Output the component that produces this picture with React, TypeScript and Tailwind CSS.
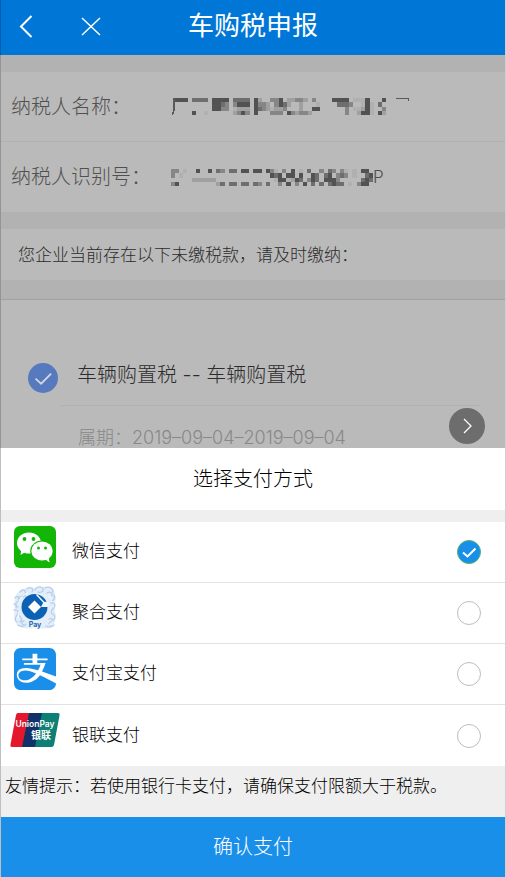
import { useState } from "react";
import type { ReactNode } from "react";
import { FaAlipay } from "react-icons/fa";

const shades: Record<string, string> = {
  "1": "#b0b0b0",
  "2": "#a0a0a0",
  "3": "#868686",
  "4": "#6e6e6e",
  "5": "#525252",
};

const nameCells = [
  ".555.4444.5555.4444.52..335.22332.3....5555.1115...5......",
  "..........5543.3555.5332.3542..2...1....4443..151.4.......",
  "..........5533.1222.54321223...2..55......3.11251..3......",
  ".....5..1......2353.5...333.532332........3..2551.52......",
];

const numberCells = [
  "33.1..5..5.43.44.55.55.531.3.5.1.4..3.43.31.1.55.",
  "3.1.....................545.55.5..54.45.343.1..45",
  ".....222222..............1551254.354.5553.....454",
  "35.........24.44.44.43.4..3.5.3.5.4.4.4544.1.355.",
];

function Mosaic({ cells, children }: { cells: string[]; children?: ReactNode }) {
  const cols = cells[0].length;
  return (
    <svg width={Math.round(cols * 4.13)} height="17" viewBox={`0 0 ${cols} 4`} preserveAspectRatio="none" shapeRendering="crispEdges" aria-hidden="true">
      {cells.map((row, y) =>
        row.split("").map((c, x) =>
          c === "." ? null : <rect key={`${x}-${y}`} x={x} y={y} width="1" height="1" fill={shades[c]} />
        )
      )}
      {children}
    </svg>
  );
}

function WechatIcon() {
  return (
    <svg width="42" height="42" viewBox="0 0 42 42" aria-hidden="true">
      <rect width="42" height="42" rx="6" fill="#13b607" />
      <path d="M7.500 22 6.500 29 13 25z" fill="#fff" />
      <ellipse cx="15" cy="17" rx="12" ry="10.500" fill="#fff" />
      <ellipse cx="28" cy="25" rx="11.800" ry="10.400" fill="#13b607" />
      <ellipse cx="28" cy="25" rx="10.700" ry="9.400" fill="#fff" />
      <path d="M30 32.500 35.500 36.500 34.500 30z" fill="#fff" />
      <circle cx="10.500" cy="13" r="1.900" fill="#13b607" />
      <circle cx="19.500" cy="13" r="1.900" fill="#13b607" />
      <circle cx="24.500" cy="22" r="1.500" fill="#13b607" />
      <circle cx="31.500" cy="22" r="1.500" fill="#13b607" />
    </svg>
  );
}

function CcbIcon() {
  return (
    <svg width="46" height="46" viewBox="0 0 46 46" aria-hidden="true">
      <path d="M5 8Q14 0 24 3Q34-1 42 5Q45 14 42 22Q46 32 41 41Q32 46 24 42Q12 46 5 40Q0 32 3 23Q1 14 5 8z" fill="#e4eef9" />
      <g fill="none" stroke="#b4cfed" strokeWidth="1.300" strokeLinecap="round">
        <path d="M3 13c3-4 6 1 3 3s-3 5 0 6M8 7c3-4 7-1 5 2s-6 2-7 5M15 4c4-3 7 0 5 3M23 5c2-4 7-4 8-1s-3 4-5 3" />
        <path d="M33 3c4-2 8 0 8 4M35 8c3-2 6 0 5 3M42 10c2 4-1 6-3 5M39 18c4-1 5 3 3 5s-4 3-2 6" />
        <path d="M2 25c4-1 5 2 3 5s-3 5 0 7M7 30c2 3 4 4 1 7M6 40c3 2 6 2 8-1M12 36c-3 0-3 3 0 4" />
        <path d="M41 29c3 2 2 6-1 7s-4 4-1 5M37 34c3-1 5 1 3 4M34 41c3 2 6 1 8-1M11 12c2-2 4-1 3 1M2 19c2 0 3 2 2 4" />
      </g>
      <g fill="none" stroke="#fff" strokeWidth="1">
        <path d="M7 16c2-4 5-7 9-8M37 11c2 2 3 4 2 6M6 27c1 2 1 4 0 6M37 40c2-1 3-2 4-4" />
      </g>
      <circle cx="22.500" cy="22" r="13" fill="#0b62b5" />
      <path d="M24.500 9.500 32 17.500" stroke="#fff" strokeWidth="1.400" />
      <path d="M31.500 17 37 16.500 36.500 22H29z" fill="#eef5fc" />
      <path d="M22.500 15.500 29 22 22.500 28.500 16 22z" fill="#fff" />
      <text x="23" y="42" textAnchor="middle" fontFamily="Inter, sans-serif" fontSize="7" fontWeight="700" fill="#1d68b4">Pay</text>
    </svg>
  );
}

function UnionPayIcon() {
  return (
    <svg width="50" height="34" viewBox="0 0 50 34" aria-hidden="true">
      <path d="M8 0h12l-7 34H2q-2 0-1.600-2L6 2q.5-2 2-2z" fill="#e3182d" />
      <path d="M19 0h14l-7 34H12z" fill="#123168" />
      <path d="M32 0h16q2 0 1.600 2L44 32q-.5 2-2.500 2H25z" fill="#0d7f74" />
      <text x="25" y="14" textAnchor="middle" fontFamily="Inter, sans-serif" fontSize="8.500" fontWeight="600" fill="#fff">UnionPay</text>
      <text x="31" y="26" textAnchor="middle" fontFamily="Inter, 'Noto Sans CJK SC', sans-serif" fontSize="10" fontWeight="700" fill="#fff">银联</text>
    </svg>
  );
}

function Check({ className }: { className: string }) {
  return (
    <svg viewBox="0 0 24 24" className={className} fill="none" stroke="currentColor" aria-hidden="true">
      <path d="M6 12.500 10.500 16.500 18.500 8.500" />
    </svg>
  );
}

const methods = [
  { id: "wechat", label: "微信支付", icon: <WechatIcon /> },
  { id: "ccb", label: "聚合支付", icon: <CcbIcon /> },
  { id: "alipay", label: "支付宝支付", icon: <FaAlipay className="h-12 w-[42px] text-[#1a8fea]" /> },
  { id: "unionpay", label: "银联支付", icon: <UnionPayIcon /> },
];

function App() {
  const [method, setMethod] = useState("wechat");
  const [selected, setSelected] = useState(true);

  return (
    <div className="flex min-h-screen flex-col border-r border-[#d0d0d0] bg-[#efefef] font-['Inter','Noto_Sans_CJK_SC',sans-serif] font-light">
      <header className="grid h-[55px] grid-cols-[1fr_auto_1fr] items-center border-l border-black/20 bg-[#0077d6] pb-1 text-white">
        <div className="flex items-center pl-4">
          <button type="button" aria-label="返回" className="flex w-16 items-center">
            <svg width="20" height="24" viewBox="0 0 20 24" fill="none" stroke="currentColor" strokeWidth="2" aria-hidden="true">
              <path d="M14.500 2 4 12.500 14.500 23" />
            </svg>
          </button>
          <button type="button" aria-label="关闭">
            <svg width="20" height="20" viewBox="0 0 20 20" fill="none" stroke="currentColor" strokeWidth="1.500" aria-hidden="true">
              <path d="M1 2 19 19M19 2 1 19" />
            </svg>
          </button>
        </div>
        <h1 className="text-[26px] leading-8 font-normal">车购税申报</h1>
      </header>

      <main className="relative flex-1 border-l border-black/20 bg-[#bababa] text-[#2c2c2c]">
        <dl className="border-y-[17px] border-[#b2b2b2] text-[20px] leading-6 text-[#505050]">
          <div className="flex h-[70px] items-center border-b border-[#b0b0b0] pl-[10px]">
            <dt className="w-40">纳税人名称：</dt>
            <dd>
              <Mosaic cells={nameCells}>
                <path d="M1 0H.6V2.500L.1 4H.5L1 2.500z" fill="#5a5a5a" />
                <path d="M54.300 0H57.500V.7H57.200V.3H54.300z" fill="#5a5a5a" />
              </Mosaic>
            </dd>
          </div>
          <div className="flex h-[70px] items-center pl-[10px]">
            <dt className="w-40">纳税人识别号：</dt>
            <dd className="flex items-center">
              <Mosaic cells={numberCells} />
              <span className="text-[17px] leading-5">P</span>
            </dd>
          </div>
        </dl>
        <p className="h-[51px] pl-[17px] text-[17px] leading-[52px]">您企业当前存在以下未缴税款，请及时缴纳：</p>
        <div className="h-5 border-b border-[#a2a2a2] bg-[#b2b2b2]" />
        <section className="pt-[57px] pl-[27px]">
          <div className="flex items-center">
            <label className="relative mt-[6px] mr-[19px] block size-[30px]">
              <input
                type="checkbox"
                aria-label="车辆购置税"
                checked={selected}
                onChange={(e) => setSelected(e.target.checked)}
                className="peer block size-[30px] appearance-none rounded-full border border-[#8d8d8d] checked:border-0 checked:bg-[#5779bd]"
              />
              <Check className="pointer-events-none absolute inset-0 hidden stroke-[1.5] text-[#d0d6e2] peer-checked:block" />
            </label>
            <h2 className="text-[20px] leading-7 font-light">车辆购置税 -- 车辆购置税</h2>
          </div>
          <p className="mt-3 mr-6 ml-8 border-t border-[#b1b1b1] pt-[22px] pl-[18px] text-[18px] leading-5 text-[#888]">属期：2019–09–04–2019–09–04</p>
        </section>
        <button type="button" aria-label="下一项" className="absolute right-5 bottom-1 flex size-9 items-center justify-center rounded-full bg-[#6d6d6d] text-white">
          <svg width="12" height="16" viewBox="0 0 12 16" fill="none" stroke="currentColor" strokeWidth="1.300" aria-hidden="true">
            <path d="M3 1 10 8 3 15" />
          </svg>
        </button>
      </main>

      <form className="border-l border-black/20 text-black" onSubmit={(e) => e.preventDefault()}>
        <h2 className="border-b-12 border-[#efefef] bg-white text-center text-[20px] leading-[62px] font-light">选择支付方式</h2>
        <div role="radiogroup" aria-label="选择支付方式" className="divide-y divide-[#e2e2e2] bg-white">
          {methods.map((m) => (
            <label key={m.id} className="flex h-[61px] items-center gap-3 pr-6 pl-[9px] text-[17px] leading-6">
              <span className="flex size-[50px] items-center justify-center self-start">{m.icon}</span>
              <span className="flex-1 pb-[2px]">{m.label}</span>
              <span className="relative">
                <input
                  type="radio"
                  name="method"
                  value={m.id}
                  checked={method === m.id}
                  onChange={() => setMethod(m.id)}
                  className="peer block size-6 appearance-none rounded-full border border-[#bdbdbd] checked:border-[#4db56a] checked:bg-[#1a8fea]"
                />
                <Check className="pointer-events-none absolute inset-0 hidden stroke-2 text-white peer-checked:block" />
              </span>
            </label>
          ))}
        </div>
        <p className="h-[51px] bg-[#efefef] pl-1 text-[17px] leading-10">友情提示：若使用银行卡支付，请确保支付限额大于税款。</p>
        <button type="submit" className="block h-[60px] w-full bg-[#1a8fea] text-[20px] text-white">确认支付</button>
      </form>
    </div>
  );
}

export default App;
